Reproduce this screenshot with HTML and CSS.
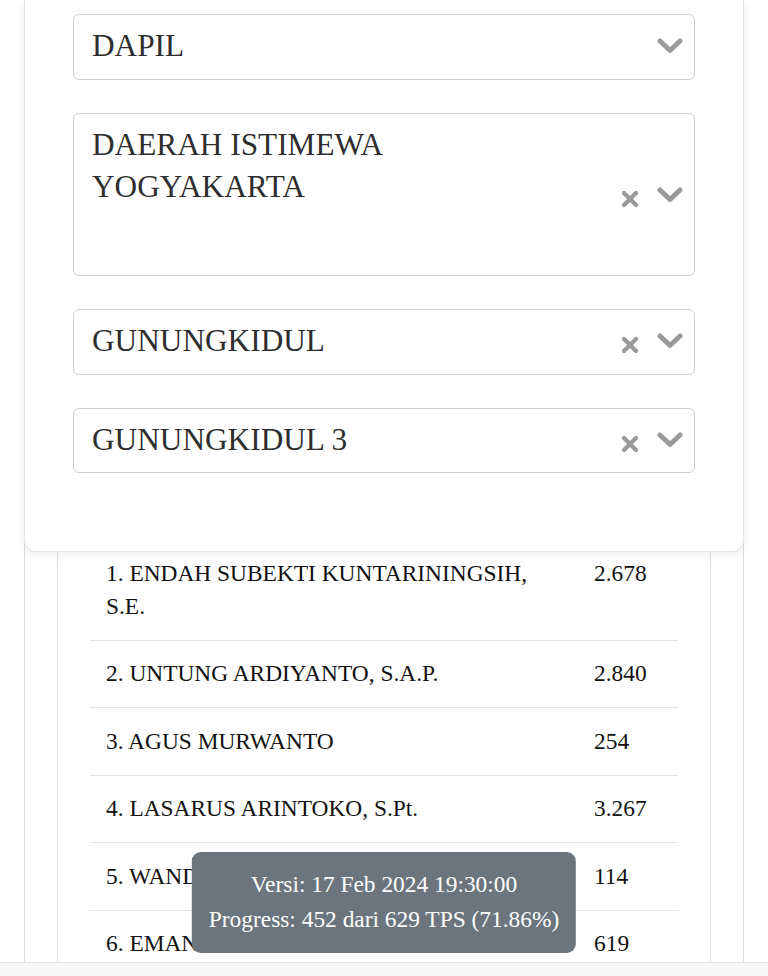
FILE: index.html
```html
<!DOCTYPE html>
<html lang="id">
<head>
<meta charset="utf-8">
<title>Hasil Suara</title>
<link rel="stylesheet" href="styles.css">
</head>
<body>
<div class="page">
  <div class="card">
    <div class="select">
      <div class="value">DAPIL</div>
      <div class="icons">
        <svg class="chev" viewBox="0 0 26 16" width="26" height="16"><polyline points="3,3 13,12.5 23,3"/></svg>
      </div>
    </div>
    <div class="select multi">
      <div class="value">DAERAH ISTIMEWA YOGYAKARTA</div>
      <div class="icons">
        <svg class="clear" viewBox="0 0 18 18" width="18" height="18"><line x1="3" y1="3" x2="15" y2="15"/><line x1="15" y1="3" x2="3" y2="15"/></svg>
        <svg class="chev" viewBox="0 0 26 16" width="26" height="16"><polyline points="3,3 13,12.5 23,3"/></svg>
      </div>
    </div>
    <div class="select">
      <div class="value">GUNUNGKIDUL</div>
      <div class="icons">
        <svg class="clear" viewBox="0 0 18 18" width="18" height="18"><line x1="3" y1="3" x2="15" y2="15"/><line x1="15" y1="3" x2="3" y2="15"/></svg>
        <svg class="chev" viewBox="0 0 26 16" width="26" height="16"><polyline points="3,3 13,12.5 23,3"/></svg>
      </div>
    </div>
    <div class="select">
      <div class="value">GUNUNGKIDUL 3</div>
      <div class="icons">
        <svg class="clear" viewBox="0 0 18 18" width="18" height="18"><line x1="3" y1="3" x2="15" y2="15"/><line x1="15" y1="3" x2="3" y2="15"/></svg>
        <svg class="chev" viewBox="0 0 26 16" width="26" height="16"><polyline points="3,3 13,12.5 23,3"/></svg>
      </div>
    </div>
  </div>

  <div class="results">
    <div class="inner">
      <table class="table">
        <colgroup><col class="c-name"><col class="c-num"></colgroup>
        <tbody>
          <tr><td>1. ENDAH SUBEKTI KUNTARININGSIH, S.E.</td><td>2.678</td></tr>
          <tr><td>2. UNTUNG ARDIYANTO, S.A.P.</td><td>2.840</td></tr>
          <tr><td>3. AGUS MURWANTO</td><td>254</td></tr>
          <tr><td>4. LASARUS ARINTOKO, S.Pt.</td><td>3.267</td></tr>
          <tr><td>5. WANDA</td><td>114</td></tr>
          <tr><td>6. EMAN</td><td>619</td></tr>
        </tbody>
      </table>
    </div>
  </div>
</div>

<div class="tooltip">
  <div>Versi: 17 Feb 2024 19:30:00</div>
  <div>Progress: 452 dari 629 TPS (71.86%)</div>
</div>
<div class="bottom-bar"></div>
</body>
</html>
```
FILE: styles.css
```css
html, body {
  margin: 0;
  padding: 0;
  background: #ffffff;
  font-family: "Liberation Serif", "Times New Roman", serif;
  overflow: hidden;
  height: 976px;
}

.page {
  width: 720px;
  margin: 0 24px;
}

.card {
  position: relative;
  z-index: 2;
  background: #ffffff;
  border: 1px solid #e4e4e4;
  border-top: none;
  border-radius: 0 0 12px 12px;
  box-shadow: 0 3px 10px rgba(0, 0, 0, 0.07);
  padding: 14px 48px 78px;
  display: flex;
  flex-direction: column;
  gap: 33px;
}

.select {
  display: flex;
  align-items: center;
  border: 1px solid #cfcfcf;
  border-radius: 6px;
  padding: 10px 11px 11.5px 18px;
  color: #2e2e2e;
  font-size: 31.3px;
  line-height: 42px;
}

.select .value {
  flex: 1;
  padding-right: 200px;
}

.select.multi {
  padding-bottom: 67.5px;
}

.select.multi .icons {
  margin-bottom: -58px;
}

.icons {
  display: flex;
  align-items: center;
  gap: 18px;
}

.chev {
  display: block;
  fill: none;
  stroke: #9a9a9a;
  stroke-width: 5;
  stroke-linecap: round;
  stroke-linejoin: round;
}

.clear {
  display: block;
  margin-top: 8px;
  stroke: #9a9a9a;
  stroke-width: 4.2;
  stroke-linecap: round;
}

.results {
  margin-top: -12px;
  border-left: 1px solid #dedede;
  border-right: 1px solid #dedede;
  padding: 0 32px;
}

.inner {
  border-left: 1px solid #dedede;
  border-right: 1px solid #dedede;
  padding: 0 32px;
}

.table {
  width: 100%;
  border-collapse: collapse;
  table-layout: fixed;
  color: #111111;
  font-size: 23.4px;
  line-height: 33px;
}

.c-num {
  width: 100px;
}

.table td {
  padding: 16.75px 16px;
  border-bottom: 1px solid #e2e2e2;
  vertical-align: top;
}

.tooltip {
  position: fixed;
  left: 50%;
  bottom: 23px;
  transform: translateX(-50%);
  background: #6c757d;
  color: #ffffff;
  border-radius: 9px;
  padding: 15px 17px 16px;
  font-size: 23.4px;
  line-height: 35px;
  text-align: center;
  white-space: nowrap;
  z-index: 3;
}

.bottom-bar {
  position: fixed;
  left: 0;
  right: 0;
  bottom: 0;
  height: 13px;
  background: #f7f7f7;
  border-top: 1px solid #e3e3e3;
  z-index: 4;
}
```
